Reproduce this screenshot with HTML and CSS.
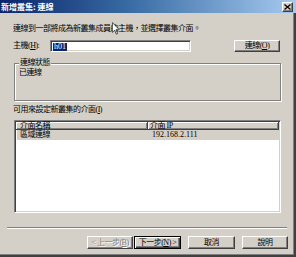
FILE: index.html
```html
<!DOCTYPE html>
<html lang="zh-Hant">
<head>
<meta charset="utf-8">
<title>新增叢集: 連線</title>
<link rel="stylesheet" href="styles.css">
</head>
<body>
<div class="window">
  <div class="titlebar">
    <span class="title">新增叢集: 連線</span>
    <span class="close">
      <svg width="7" height="6" viewBox="0 0 7 6"><path d="M0.5 0.5 L6.5 5.5 M6.5 0.5 L0.5 5.5" stroke="#000" stroke-width="1.3"/></svg>
    </span>
  </div>
  <div class="content">
    <p class="intro">連線到一部將成為新叢集成員的主機，並選擇叢集介面。</p>
    <div class="host-row">
      <span class="host-label">主機(<u>H</u>):</span>
      <div class="textbox"><span class="sel">h01</span></div>
      <button class="btn connect">連線(<u>O</u>)</button>
    </div>
    <fieldset class="status">
      <legend>連線狀態</legend>
      <div class="status-text">已連線</div>
    </fieldset>
    <div class="list-label">可用來設定新叢集的介面(<u>I</u>)</div>
    <div class="listview">
      <div class="lv-header">
        <div class="hcell c1">介面名稱</div>
        <div class="hcell c2">介面 IP</div>
        <div class="hcell c3"></div>
      </div>
      <div class="lv-row selected">
        <div class="rcell c1">區域連線</div>
        <div class="rcell c2">192.168.2.111</div>
      </div>
    </div>
  </div>
  <div class="separator"></div>
  <div class="footer">
    <button class="btn back" disabled>&lt; 上一步(<u>B</u>)</button>
    <button class="btn next default">下一步(<u>N</u>) &gt;</button>
    <button class="btn cancel">取消</button>
    <button class="btn help">說明</button>
  </div>
  <svg class="cursor" width="8" height="13" viewBox="0 0 12 19">
    <path d="M0.5 0.5 L0.5 15.5 L4 12 L6.5 18 L8.5 17.2 L6 11.3 L10.8 11.3 Z" fill="#fff" stroke="#000" stroke-width="1"/>
  </svg>
</div>
</body>
</html>
```

FILE: styles.css
```css
* { box-sizing: border-box; }
html, body { margin: 0; padding: 0; }
body {
  width: 296px;
  height: 257px;
  overflow: hidden;
  background: #d4d0c8;
  font-family: "Liberation Serif", "Noto Sans CJK TC", serif;
  font-size: 8px;
  letter-spacing: -0.5px;
  color: #000;
}
.window {
  position: relative;
  width: 296px;
  height: 257px;
  background: #d4d0c8;
  border-right: 2px solid #404040;
  border-bottom: 2px solid #404040;
  box-shadow: inset -1px -1px 0 #808080;
}
.titlebar {
  height: 13px;
  margin-right: -2px;
  background: linear-gradient(to right, #0a246a 0%, #3a6ea5 45%, #a6caf0 100%);
  display: flex;
  align-items: center;
  justify-content: space-between;
  padding: 0 3px 0 1px;
}
.title {
  color: #fff;
  font-weight: bold;
  font-size: 8px;
  letter-spacing: 0;
  line-height: 13px;
  font-family: "Noto Sans CJK TC", sans-serif;
}
.close {
  width: 11px;
  height: 10px;
  background: #d4d0c8;
  border: 1px solid;
  border-color: #fff #404040 #404040 #fff;
  box-shadow: inset -1px -1px 0 #808080;
  display: flex;
  align-items: center;
  justify-content: center;
}
.close svg { display: block; }
.content {
  padding: 11px 14px 0 13px;
}
.intro {
  margin: 0;
  height: 10px;
  line-height: 10px;
  white-space: nowrap;
}
.host-row {
  display: flex;
  align-items: center;
  height: 12px;
  margin-top: 6px;
}
.host-label {
  width: 37px;
  line-height: 10px;
  white-space: nowrap;
}
.textbox {
  width: 141px;
  height: 12px;
  background: #fff;
  border: 1px solid;
  border-color: #808080 #fff #fff #808080;
  box-shadow: inset 1px 1px 0 #404040, inset -1px -1px 0 #d4d0c8;
  padding: 2px 0 0 2px;
  line-height: 8px;
}
.sel {
  display: inline-block;
  background: #0a246a;
  color: #fff;
  padding: 0 1px;
  height: 8px;
  line-height: 8px;
  letter-spacing: 0;
}
.btn {
  font-family: "Liberation Serif", "Noto Sans CJK TC", serif;
  font-size: 8px;
  letter-spacing: -0.5px;
  color: #000;
  background: #d4d0c8;
  padding: 0;
  margin: 0;
  height: 13px;
  line-height: 10px;
  border: 1px solid;
  border-color: #fff #404040 #404040 #fff;
  box-shadow: inset -1px -1px 0 #808080;
  border-radius: 0;
  white-space: nowrap;
}
.connect {
  margin-left: auto;
  width: 46px;
  height: 12px;
}
.status {
  margin: 6px 0 0 1px;
  padding: 0 4px;
  width: 267px;
  height: 43px;
  border: 1px solid #808080;
  box-shadow: 1px 1px 0 #fff, inset 1px 1px 0 #fff;
  min-inline-size: 0;
}
.status legend {
  padding: 0 1px;
  margin: 0;
  line-height: 10px;
  background: #d4d0c8;
}
.status-text {
  line-height: 10px;
}
.list-label {
  margin-top: 4px;
  line-height: 10px;
  height: 10px;
  white-space: nowrap;
}
.listview {
  margin: 5px 0 0 1px;
  width: 267px;
  height: 93px;
  background: #fff;
  border: 1px solid;
  border-color: #808080 #fff #fff #808080;
  box-shadow: inset 1px 1px 0 #404040, inset -1px -1px 0 #d4d0c8;
  padding: 1px 1px 1px 1px;
}
.lv-header {
  display: flex;
  height: 8px;
}
.hcell {
  height: 8px;
  line-height: 7px;
  background: #d4d0c8;
  border-right: 1px solid #404040;
  border-bottom: 1px solid #404040;
  box-shadow: inset 1px 1px 0 #fff, inset -1px -1px 0 #808080;
  white-space: nowrap;
}
.hcell.c1 { width: 132px; padding-left: 4px; }
.hcell.c2 { width: 131px; padding-left: 2px; }
.hcell.c3 { flex: 1; border-right: none; }
.lv-row {
  display: flex;
  height: 10px;
  line-height: 10px;
  margin: 0 0 0 1px;
}
.lv-row.selected { background: #d4d0c8; }
.rcell { white-space: nowrap; }
.rcell.c1 { width: 131px; padding-left: 3px; }
.rcell.c2 { padding-left: 4px; letter-spacing: 0; }
.separator {
  margin: 14px 7px 0 7px;
  height: 2px;
  border-top: 1px solid #808080;
  border-bottom: 1px solid #fff;
}
.footer {
  display: flex;
  justify-content: flex-end;
  margin-top: 7px;
  padding-right: 6px;
}
.back {
  width: 46px;
  color: #808080;
  text-shadow: 1px 1px 0 #fff;
}
.next {
  width: 47px;
  margin-left: 1px;
}
.default {
  border: 1px solid #000;
  box-shadow: inset 1px 1px 0 #fff, inset -1px -1px 0 #404040, inset -2px -2px 0 #808080;
}
.cancel {
  width: 47px;
  margin-left: 7px;
}
.help {
  width: 46px;
  margin-left: 7px;
}
.cursor {
  position: absolute;
  left: 112px;
  top: 22px;
}
```
